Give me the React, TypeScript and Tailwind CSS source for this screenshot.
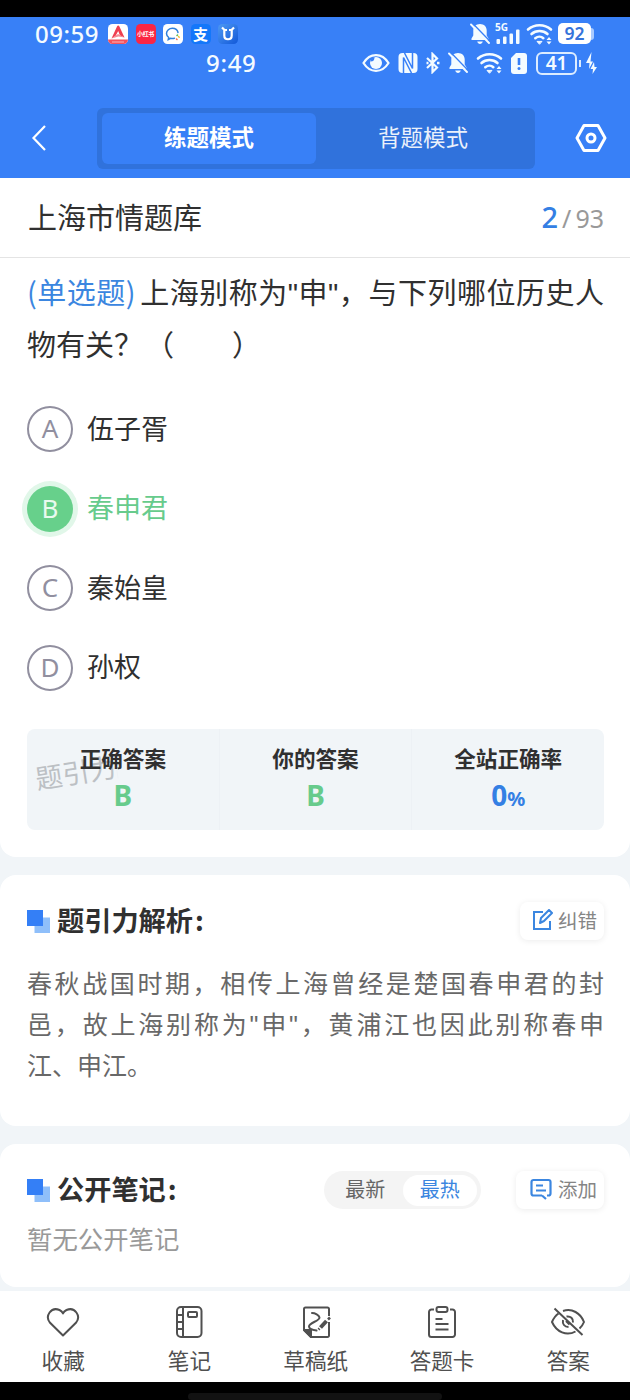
import { useState, type ReactNode } from "react";

const options = [
  { key: "A", label: "伍子胥" },
  { key: "B", label: "春申君" },
  { key: "C", label: "秦始皇" },
  { key: "D", label: "孙权" },
];

const answer = "B";

function MutedBell({ className }: { className: string }) {
  return (
    <svg viewBox="0 0 20 22" className={className}>
      <path fill="currentColor" d="M10 1C6 1 3.300 3.800 3.300 7.500v5L1.500 15.500V17h17v-1.500l-1.800-3v-5C16.700 3.800 14 1 10 1zM7.200 18.500h5.600c-.4 1.600-1.500 2.500-2.800 2.500s-2.400-.9-2.800-2.500z" />
      <path d="M2.500 .3l17.500 18" stroke="#3880f7" strokeWidth="1.500" />
      <path d="M1 1.500L19 20" stroke="currentColor" strokeWidth="1.900" strokeLinecap="round" />
    </svg>
  );
}

function Wifi({ className }: { className: string }) {
  return (
    <svg viewBox="0 0 27 22" className={className} fill="none" stroke="currentColor" strokeWidth="2.600" strokeLinecap="round">
      <path d="M2 6.500c6.500-5.700 16.500-5.700 23 0" />
      <path d="M5.500 11c4.500-4 11.500-4 16 0" />
      <path d="M9.300 15.200c2.500-2 5.900-2 8 0" />
      <path d="M13.300 21l-2.300-2.600h4.600z" fill="currentColor" strokeWidth="1" />
      <path d="M23 14l-2.500 3h5zM23 21.500l-2.500-3h5z" fill="currentColor" stroke="none" />
    </svg>
  );
}

function StatusBar() {
  return (
    <div className="h-[69px] text-[#f4fbff]">
      <div className="flex h-[33px] items-center justify-between pl-[35px] pr-[36px]">
        <div className="flex items-center">
          <span className="w-[73px] whitespace-nowrap font-['Noto_Sans'] text-[24px] leading-8 font-medium tracking-[0.5px]">09:59</span>
          <div className="flex gap-[7.500px]">
            <svg viewBox="0 0 20 20" className="size-5">
              <rect width="20" height="20" rx="4.500" fill="#fff" />
              <path d="M0 15.500h20a4.500 4.500 0 0 1-4.500 4.500h-11A4.500 4.500 0 0 1 0 15.500z" fill="#f4525d" />
              <path d="M3.500 14.500L9 2.500c.6-1.200 1.800-1.200 2.400 0L16.500 13.500l-4.500-2-1.800-4.500L7.500 12z" fill="#ef3f50" />
              <path d="M3.500 14.500l6.500-4.500 6.500 3.500-6-1z" fill="#f78b95" />
              <path d="M4 18h12" stroke="#fcb5ba" />
            </svg>
            <div className="flex size-5 items-center justify-center rounded-[4.500px] bg-[#fb2644] text-[6px] leading-none font-bold tracking-[-0.3px] text-white">小红书</div>
            <svg viewBox="0 0 20 20" className="size-5">
              <rect width="20" height="20" rx="4.500" fill="#fff" />
              <g fill="none" strokeWidth="1.500" strokeLinecap="round">
                <path d="M15 8.500C14.500 6 12.200 4.300 9.300 4.300S3.500 6.500 3.500 9.500c0 1.700.8 3 2.200 4l-.4 2 2.300-1.200c1.400.4 2.600.4 3.800 0" stroke="#3180db" />
                <path d="M14 11.500l.5-.5" stroke="#55b946" />
                <path d="M15.500 12.500l.7.700" stroke="#f4bd32" />
                <path d="M13.500 15l.5.500" stroke="#ef6247" />
              </g>
            </svg>
            <div className="flex size-5 items-center justify-center rounded-[4.500px] bg-[#1477fa] text-[15px] leading-none font-bold text-white">支</div>
            <svg viewBox="0 0 20 20" className="size-5">
              <defs>
                <linearGradient id="appBlue" x1="0" x2="1" y1="0" y2="1">
                  <stop offset="0" stopColor="#4d99f3" />
                  <stop offset="1" stopColor="#1258d8" />
                </linearGradient>
              </defs>
              <rect width="20" height="20" rx="4.500" fill="url(#appBlue)" />
              <path d="M4 3.500l2.500 2.500M16 3.500L13.500 6M9 6H6.300v5.500c0 5 7.400 5 7.400 0V6H11" fill="none" stroke="#fff" strokeWidth="2.200" />
            </svg>
          </div>
        </div>
        <div className="flex items-center">
          <MutedBell className="h-[22px] w-5" />
          <svg viewBox="0 0 26 23" className="ml-[5px] h-[23px] w-[26px] overflow-visible" fill="currentColor">
            <text x="0" y="8.500" fontSize="10" fontWeight="700" fontFamily="Noto Sans">5G</text>
            <rect x="1.500" y="17" width="3.500" height="5" rx="1" />
            <rect x="8" y="14.500" width="3.500" height="7.500" rx="1" />
            <rect x="14.500" y="11.500" width="3.500" height="10.500" rx="1" />
            <rect x="21" y="7.500" width="3.500" height="14.500" rx="1" />
          </svg>
          <Wifi className="ml-[5px] h-[22px] w-[27px]" />
          <div className="ml-[5px] flex h-[21px] w-[33px] items-center justify-center rounded-[5px] bg-white font-['Noto_Sans'] text-[17.500px] leading-none font-semibold text-[#3573da]">92</div>
          <div className="h-[12px] w-[3px] rounded-r bg-[#a9caff]" />
        </div>
      </div>
      <div className="flex h-[26px] items-center pl-[206px]">
        <span className="w-[156px] font-['Noto_Sans'] text-[24px] leading-7 font-medium tracking-[0.7px]">9:49</span>
        <svg viewBox="0 0 28 20" className="h-5 w-7">
          <path d="M1.500 10C8-.5 20-.5 26.500 10 20 20.500 8 20.500 1.500 10z" fill="none" stroke="currentColor" strokeWidth="2.200" />
          <circle cx="14" cy="10" r="6" fill="currentColor" />
          <path d="M12.500 4c0 3-1 4.500-4 4.500L9 5z" fill="#3880f7" />
        </svg>
        <svg viewBox="0 0 20 20" className="ml-[8px] h-5 w-5">
          <rect x=".5" width="19" height="20" rx="4" fill="currentColor" />
          <path d="M5.500 20V4.500l8 15.500M14.500 0v15.500L6.500 0" fill="none" stroke="#3880f7" strokeWidth="1.500" />
        </svg>
        <svg viewBox="0 0 14 22" className="ml-[8px] h-[22px] w-[14px]" fill="none" stroke="currentColor" strokeWidth="2.200">
          <path d="M1 6l10 9.500L6.500 20V2L11 6.500 1 16" />
          <path d="M.5 11H2.500M11 11h2.500" strokeWidth="2.500" />
        </svg>
        <MutedBell className="ml-[8px] h-[22px] w-5" />
        <Wifi className="ml-[8px] h-[22px] w-[27px]" />
        <svg viewBox="0 0 16 21" className="ml-[8px] h-[21px] w-4">
          <path d="M5 0h8a3 3 0 0 1 3 3v15a3 3 0 0 1-3 3H3a3 3 0 0 1-3-3V5z" fill="currentColor" />
          <path d="M8 5v7" stroke="#3880f7" strokeWidth="2.600" />
          <circle cx="8" cy="15.500" r="1.500" fill="#3880f7" />
        </svg>
        <div className="ml-[9px] flex h-[23px] w-[41px] items-center justify-center rounded-[6px] border-2 border-[#dcecff] font-['Noto_Sans'] text-[19px] leading-none font-semibold">41</div>
        <div className="ml-[2px] h-[7px] w-[2px] bg-[#dcecff]" />
        <svg viewBox="0 0 11 22" className="ml-[5px] h-[22px] w-[11px]" fill="currentColor">
          <path d="M5.500 0L0 11h3.500L3 17l4-7.500H4.500zM8 10l-3.500 7H7l-.5 5L11 15H8.500z" />
        </svg>
      </div>
    </div>
  );
}

function ModeHeader() {
  const [mode, setMode] = useState("练题模式");
  return (
    <div className="flex h-[92px] items-start pt-[22px] pl-[30px]">
      <svg viewBox="0 0 16 28" className="mt-[16px] h-7 w-[18px]" fill="none" stroke="#fff" strokeWidth="2.200">
        <path d="M14 2L2.500 14 14 26" />
      </svg>
      <div className="ml-[49px] flex h-[61px] w-[438px] rounded-[6px] bg-[#3072dc] p-[5px]">
        {["练题模式", "背题模式"].map((m) => (
          <button
            key={m}
            onClick={() => setMode(m)}
            className={`h-[51px] w-[214px] rounded-[6px] pb-[4px] text-[22.500px] leading-none text-white ${m === mode ? "bg-[#3880f7] font-bold" : "opacity-90"}`}
          >
            {m}
          </button>
        ))}
      </div>
      <svg viewBox="0 0 32 30" className="ml-[40px] mt-[15px] h-[30px] w-8" fill="none" stroke="#fff" strokeWidth="3">
        <path d="M9 2.500h14L30 15l-7 12.500H9L2 15z" strokeLinejoin="round" />
        <circle cx="16" cy="15" r="4" />
      </svg>
    </div>
  );
}

function Option({ label, letter }: { label: string; letter: string }) {
  const right = letter === answer;
  return (
    <div className="flex h-[46px] items-center">
      <div
        className={`flex size-[46px] items-center justify-center rounded-full pb-[2px] font-['Noto_Sans'] text-[26px] leading-none ${
          right ? "bg-[#67d08b] text-[#e9faef] ring-[5px] ring-[#e1f7e9]" : "border-2 border-[#918f9f] text-[#918f9f]"
        }`}
      >
        {letter}
      </div>
      <span className={`ml-[14px] pb-[4px] text-[27px] leading-none ${right ? "text-[#67cb8c]" : "text-[#303030]"}`}>{label}</span>
    </div>
  );
}

function Quote() {
  return <span className="font-['Liberation_Sans'] leading-none">"</span>;
}

function SectionTitle({ children }: { children: ReactNode }) {
  return (
    <div className="flex items-center">
      <svg viewBox="0 0 24 24" className="mt-[2px] size-6">
        <path d="M7.500 7.500H23V23H7.500z" fill="#8fbffa" />
        <path d="M0 0h16v16H0z" fill="#347ff6" />
      </svg>
      <h2 className="ml-[6px] pb-[3px] text-[27.200px] leading-none font-bold text-[#303030]">
        {children}
        <span className="ml-[2px]">:</span>
      </h2>
    </div>
  );
}

function Stat({ title, children }: { title: string; children: ReactNode }) {
  return (
    <div className="flex flex-1 flex-col items-center pt-[18px]">
      <div className="text-[21.600px] leading-[22px] font-bold text-[#303030]">{title}</div>
      <div className="mt-[12px] font-['Noto_Sans'] text-[28px] leading-[28px] font-bold text-[#67cb8c]">{children}</div>
    </div>
  );
}

function Tool({ label, children }: { label: string; children: ReactNode }) {
  return (
    <div className="flex w-[126.300px] shrink-0 flex-col items-center pt-[13px] text-[#505050]">
      <svg viewBox="0 0 36 36" className="size-9" fill="none" stroke="currentColor" strokeWidth="2" strokeLinejoin="round">
        {children}
      </svg>
      <span className="mt-[9px] text-[21.600px] leading-[22px]">{label}</span>
    </div>
  );
}

export default function App() {
  const [sort, setSort] = useState("最热");

  return (
    <div className="flex h-[1400px] w-[630px] flex-col overflow-hidden bg-[#f1f5f8] font-['Noto_Sans_CJK_SC',sans-serif]">
      <div className="h-[17px] bg-black" />
      <header className="h-[161px] bg-[#3880f7]">
        <StatusBar />
        <ModeHeader />
      </header>

      <section className="h-[679px] rounded-b-[16px] bg-white">
        <div className="flex h-20 items-center justify-between border-b border-[#e4e4e4] pr-[26px] pl-[28px]">
          <h1 className="pb-[2px] text-[29px] leading-none text-[#303030]">上海市情题库</h1>
          <div className="font-['Noto_Sans'] text-[25px] leading-8 text-[#999]">
            <span className="text-[29px] font-medium text-[#347fe4]">2</span>
            <span className="mx-[4px]">/</span>93
          </div>
        </div>
        <div className="pt-[7px] pr-[26px] pl-[27px] text-[29px] leading-[52px] text-[#303030]">
          <div className="h-[52px] [text-align-last:justify] whitespace-nowrap">
            <span className="mr-[4px] text-[#3b86e0]">(单选题)</span>上海别称为<Quote />申<Quote />，与下列哪位历史人
          </div>
          <div className="h-[52px] whitespace-pre">
            物有关？<span className="ml-[2px]">（　　）</span>
          </div>
        </div>
        <div className="flex flex-col gap-[33.500px] px-[27px] pt-[37px]">
          {options.map((o) => (
            <Option key={o.key} letter={o.key} label={o.label} />
          ))}
        </div>
        <div className="relative mt-[38px] mr-[26px] ml-[27px] flex h-[101px] divide-x divide-[#edf1f5] rounded-[8px] bg-[#f1f5f8]">
          <span className="absolute top-[29px] left-[8px] rotate-[-9deg] text-[27px] leading-none text-[#bcc0c4]">题引力</span>
          <div className="relative flex flex-1">
            <Stat title="正确答案">{answer}</Stat>
          </div>
          <Stat title="你的答案">{answer}</Stat>
          <Stat title="全站正确率">
            <span className="text-[#347fe4]">
              0<span className="text-[20px]">%</span>
            </span>
          </Stat>
        </div>
      </section>

      <section className="mt-[18px] h-[251px] rounded-[16px] bg-white pt-[27px] pr-[26px] pl-[27px]">
        <div className="flex h-[38px] items-center justify-between">
          <SectionTitle>题引力解析</SectionTitle>
          <button className="flex h-[38px] w-[84px] items-center justify-end gap-[4px] rounded-[8px] pr-[7px] pb-[2px] text-[19.500px] leading-none text-[#858585] shadow-[0_1px_6px_rgba(0,0,0,0.08)]">
            <svg viewBox="0 0 22 22" className="size-[22px]" fill="none" stroke="#3b86e0" strokeWidth="2">
              <path d="M11 3H2v17h16v-8" />
              <path d="M8 14l1-5 8-8 3 3-8 8z" strokeLinejoin="round" />
            </svg>
            纠错
          </button>
        </div>
        <div className="mt-[22px] text-[25px] leading-[41px] whitespace-nowrap text-[#686868]">
          <div className="h-[41px] [text-align-last:justify]">春秋战国时期，相传上海曾经是楚国春申君的封</div>
          <div className="h-[41px] [text-align-last:justify]">
            邑，故上海别称为<Quote />申<Quote />，黄浦江也因此别称春申
          </div>
          <div className="h-[41px]">江、申江。</div>
        </div>
      </section>

      <section className="mt-[18px] h-[143px] rounded-[16px] bg-white pt-[27px] pr-[26px] pl-[27px]">
        <div className="flex h-[38px] items-center">
          <SectionTitle>公开笔记</SectionTitle>
          <div className="ml-auto flex h-[38px] w-[157px] items-center rounded-full bg-[#f4f4f4] p-[4px]">
            {["最新", "最热"].map((s) => (
              <button
                key={s}
                onClick={() => setSort(s)}
                className={`h-[31px] w-[75px] rounded-full pb-[2px] text-[20px] leading-none ${s === sort ? "bg-white text-[#3b86e0]" : "text-[#666]"}`}
              >
                {s}
              </button>
            ))}
          </div>
          <button className="ml-[35px] flex h-[38px] w-[88px] items-center justify-end gap-[6px] rounded-[8px] pr-[7px] pb-[2px] text-[19.500px] leading-none text-[#858585] shadow-[0_1px_6px_rgba(0,0,0,0.08)]">
            <svg viewBox="0 0 22 22" className="size-[22px]" fill="none" stroke="#3b86e0" strokeWidth="2.200">
              <path d="M12 17.500H3.500a2 2 0 0 1-2-2V4a2 2 0 0 1 2-2h15a2 2 0 0 1 2 2v11.500a2 2 0 0 1-2 2H17M12 17.500l4 3.500" />
              <path d="M6 7.500h7M6 12.500h10" />
            </svg>
            添加
          </button>
        </div>
        <p className="mt-[16px] text-[25.400px] leading-[26px] text-[#999]">暂无公开笔记</p>
      </section>

      <nav className="mt-[4px] flex h-[91px] bg-white">
        <Tool label="收藏">
          <path d="M18 31.500L4.800 18.500C-.2 12 6 2.500 14.500 6c1.500.7 2.800 1.700 3.500 3.500.7-1.800 2-2.800 3.500-3.500 8.500-3.500 14.700 6 9.700 12.500z" />
        </Tool>
        <Tool label="笔记">
          <rect x="6" y="3" width="24.500" height="30" rx="4" />
          <path d="M12 3v30M6 11h6M6 18h6M6 25h6" />
          <rect x="17" y="8" width="9" height="5" rx="1" />
        </Tool>
        <Tool label="草稿纸">
          <path d="M31 12V5a1.500 1.500 0 0 0-1.500-1.500h-22A1.500 1.500 0 0 0 6 5v21l7 7h16.500a1.500 1.500 0 0 0 1.500-1.500V18" />
          <path d="M6 26h7v7z" fill="currentColor" />
          <path d="M14 9c3 0 7 2 7.500 4.500.5 3.500-10.500 5-10.500 9 0 2.500 4 3.500 7.500 4" strokeLinecap="round" />
          <path d="M22.500 23.500l6-6.500" strokeWidth="4" />
          <path d="M20.500 25.500l1-1M30 15.500l2-2" strokeWidth="2.500" />
        </Tool>
        <Tool label="答题卡">
          <path d="M10 5.500H7.500A2.500 2.500 0 0 0 5 8v22.500A2.500 2.500 0 0 0 7.500 33h21a2.500 2.500 0 0 0 2.500-2.500V8a2.500 2.500 0 0 0-2.500-2.500H26" />
          <rect x="12.500" y="3" width="11" height="5" rx="2" />
          <path d="M11.500 15h7M11.500 20h13M11.500 25.500h13" />
        </Tool>
        <Tool label="答案">
          <path d="M8.500 9.500C5.500 11.500 3.500 14.500 2 18c4.500 10 14.500 14.500 23.500 9.500M13 7C22 4 30.500 9 34 18c-1 2.500-2.500 4.700-4.500 6.500" />
          <path d="M16.500 12.500c4-.7 7 2 6.500 6M13 16c-.8 4 1.500 7 5.500 7M4.500 4.500l28 26.500M16 17l3.500 3.500" />
        </Tool>
      </nav>

      <footer className="flex h-[18px] justify-center bg-black pt-[11px]">
        <div className="h-[7px] w-[254px] rounded-full bg-[#121212]" />
      </footer>
    </div>
  );
}
